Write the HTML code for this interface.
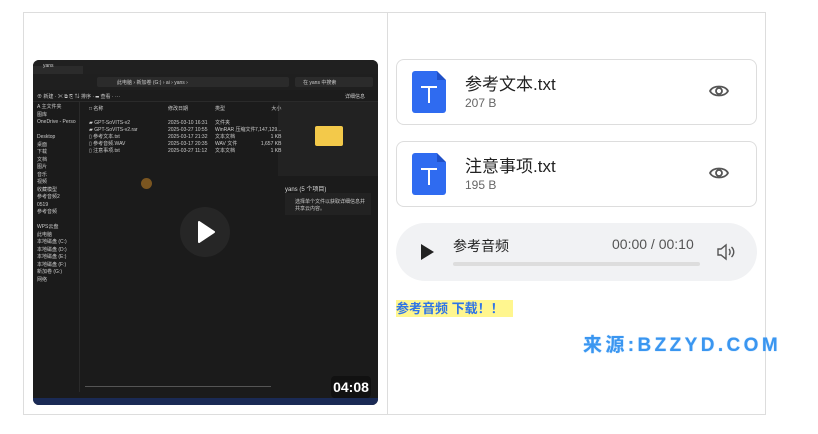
<!DOCTYPE html>
<html><head><meta charset="utf-8"><style>
*{margin:0;padding:0;box-sizing:border-box}
body{width:818px;height:434px;background:#fff;font-family:"Liberation Sans","Noto Sans CJK SC",sans-serif;position:relative;overflow:hidden}
.abs{position:absolute}
.frame{left:23px;top:12px;width:743px;height:403px;border:1px solid #ddd}
.div{left:387px;top:12px;width:1px;height:403px;background:#ddd}
.video{left:33px;top:60px;width:345px;height:345px;background:#1b1b1b;border-radius:6px;overflow:hidden}
.card{left:396px;width:361px;height:66px;border:1px solid #ddd;border-radius:8px;background:#fff}
.ficon{left:15px;top:11px;width:34px;height:42px;background:#2f6bf0;border-radius:3px}
.ficon:after{content:"";position:absolute;right:0;top:0;border-style:solid;border-width:0 9px 9px 0;border-color:#fff #fff #1f50c8 #1f50c8}
.ficon i{position:absolute;background:#fff}
.name{left:68px;top:10px;font-size:17px;color:#222}
.size{left:68px;top:36px;font-size:12px;color:#666}
.eye{left:312px;top:23px}
.t{color:#ccc;font-size:5px;position:absolute;white-space:nowrap}
</style></head><body>
<div class="abs frame"></div>
<div class="abs div"></div>
<div class="abs video">
 <div class="abs" style="left:0;top:0;width:345px;height:14px;background:#202020"></div>
 <div class="abs" style="left:0;top:6px;width:50px;height:8px;background:#2b2b2b"></div>
 <div class="t" style="left:10px;top:3px">yans</div>
 <div class="abs" style="left:0;top:14px;width:345px;height:16px;background:#1f1f1f"></div>
 <div class="abs" style="left:64px;top:17px;width:192px;height:10px;background:#2b2b2b;border-radius:2px"></div>
 <div class="abs" style="left:262px;top:17px;width:78px;height:10px;background:#2b2b2b;border-radius:2px"></div>
 <div class="t" style="left:84px;top:19px">此电脑 › 新加卷 (G:) › ai › yans ›</div>
 <div class="t" style="left:270px;top:19px">在 yans 中搜索</div>
 <div class="abs" style="left:0;top:30px;width:345px;height:12px;background:#1c1c1c;border-bottom:1px solid #2a2a2a"></div>
 <div class="t" style="left:4px;top:33px">⊕ 新建 ·     ✂   ⧉   ⎘   ⇅ 排序 ·  ☰ 查看 ·  ···</div>
 <div class="t" style="left:312px;top:33px">详细信息</div>
 <div class="abs" style="left:46px;top:42px;width:1px;height:290px;background:#2a2a2a"></div>
 <div class="abs" style="left:245px;top:42px;width:100px;height:74px;background:#222"></div>
 <div class="abs" style="left:282px;top:66px;width:28px;height:20px;background:#f3c94a;border-radius:2px"></div>
 <div class="t" style="left:252px;top:124px;font-size:6px;color:#ddd">yans (5 个项目)</div>
 <div class="abs" style="left:252px;top:133px;width:86px;height:22px;background:#222"></div>
 <div class="t" style="left:262px;top:138px">选择单个文件以获取详细信息并</div>
 <div class="t" style="left:262px;top:145px">共享云内容。</div>
 <div class="t" style="left:4px;top:44px;line-height:7.5px">
 A 主文件夹<br>图库<br>OneDrive - Perso<br><br>Desktop<br>桌面<br>下载<br>文档<br>图片<br>音乐<br>视频<br>收藏模型<br>参考音频2<br>0519<br>参考音频<br><br>WPS云盘<br>此电脑<br>本地磁盘 (C:)<br>本地磁盘 (D:)<br>本地磁盘 (E:)<br>本地磁盘 (F:)<br>新加卷 (G:)<br>网络</div>
 <div class="t" style="left:56px;top:46px;line-height:7px">□ 名称<br><br>▰ GPT-SoVITS-v2<br>▰ GPT-SoVITS-v2.rar<br>▯ 参考文本.txt<br>▯ 参考音频.WAV<br>▯ 注意事项.txt</div>
 <div class="t" style="left:135px;top:46px;line-height:7px">修改日期<br><br>2025-03-10 16:31<br>2025-03-27 10:55<br>2025-03-17 21:32<br>2025-03-17 20:35<br>2025-03-27 11:12</div>
 <div class="t" style="left:182px;top:46px;line-height:7px">类型<br><br>文件夹<br>WinRAR 压缩文件<br>文本文档<br>WAV 文件<br>文本文档</div>
 <div class="t" style="left:222px;top:46px;line-height:7px;text-align:right">大小<br><br>&nbsp;<br>7,147,129...<br>1 KB<br>1,657 KB<br>1 KB</div>
 <div class="abs" style="left:108px;top:118px;width:11px;height:11px;border-radius:50%;background:#7a5520"></div>
 <div class="abs" style="left:147px;top:147px;width:50px;height:50px;border-radius:50%;background:#262626"></div>
 <svg class="abs" style="left:163px;top:161px" width="20" height="22"><path d="M3 1 L18 11 L3 21 Z" fill="#fff" stroke="#fff" stroke-width="2" stroke-linejoin="round"/></svg>
 <div class="abs" style="left:52px;top:326px;width:186px;height:1px;background:#555"></div>
 <div class="abs" style="left:0;top:338px;width:345px;height:7px;background:#1a2a55"></div>
 <div class="abs" style="left:298px;top:316px;width:40px;height:22px;border-radius:4px;background:#111;color:#fff;font-size:14px;font-weight:bold;text-align:center;line-height:22px">04:08</div>
</div>

<div class="abs card" style="top:59px">
 <div class="abs ficon"><i style="left:9px;top:15px;width:16px;height:2px"></i><i style="left:16px;top:15px;width:2px;height:17px"></i></div>
 <div class="abs name">参考文本.txt</div><div class="abs size">207 B</div>
 <svg class="abs eye" width="20" height="16" viewBox="0 0 20 16"><path d="M1 8 C4 2,16 2,19 8 C16 14,4 14,1 8Z" fill="none" stroke="#555" stroke-width="1.8"/><circle cx="10" cy="8" r="3" fill="none" stroke="#555" stroke-width="1.8"/></svg>
</div>
<div class="abs card" style="top:141px">
 <div class="abs ficon"><i style="left:9px;top:15px;width:16px;height:2px"></i><i style="left:16px;top:15px;width:2px;height:17px"></i></div>
 <div class="abs name">注意事项.txt</div><div class="abs size">195 B</div>
 <svg class="abs eye" width="20" height="16" viewBox="0 0 20 16"><path d="M1 8 C4 2,16 2,19 8 C16 14,4 14,1 8Z" fill="none" stroke="#555" stroke-width="1.8"/><circle cx="10" cy="8" r="3" fill="none" stroke="#555" stroke-width="1.8"/></svg>
</div>
<div class="abs" style="left:396px;top:223px;width:361px;height:58px;border-radius:29px;background:#f1f2f4">
 <svg class="abs" style="left:24px;top:20px" width="16" height="18"><path d="M1 1 L14 9 L1 17Z" fill="#222"/></svg>
 <div class="abs" style="left:57px;top:13px;font-size:14px;color:#222">参考音频</div>
 <div class="abs" style="left:216px;top:13px;font-size:14px;color:#555">00:00 / 00:10</div>
 <div class="abs" style="left:57px;top:39px;width:247px;height:4px;background:#ddd;border-radius:2px"></div>
 <svg class="abs" style="left:320px;top:20px" width="20" height="18" viewBox="0 0 20 18"><path d="M2 6h3l5-4v14l-5-4H2z" fill="none" stroke="#555" stroke-width="1.4"/><path d="M13 6c1.5 1.5 1.5 4.5 0 6M15.5 4c3 3 3 7 0 10" fill="none" stroke="#555" stroke-width="1.4"/></svg>
</div>
<div class="abs" style="left:396px;top:300px;width:117px;height:17px;background:#fff68f"></div>
<div class="abs" style="left:396px;top:300px;font-size:13px;font-weight:bold;color:#2f74e6;line-height:17px">参考音频 下载！！</div>
<div class="abs" style="left:583px;top:334px;font-size:19px;font-weight:bold;color:#3a96f0;letter-spacing:3.4px;line-height:24px;text-shadow:0 0 1px #7bbcff">来源:BZZYD.COM</div>
</body></html>
